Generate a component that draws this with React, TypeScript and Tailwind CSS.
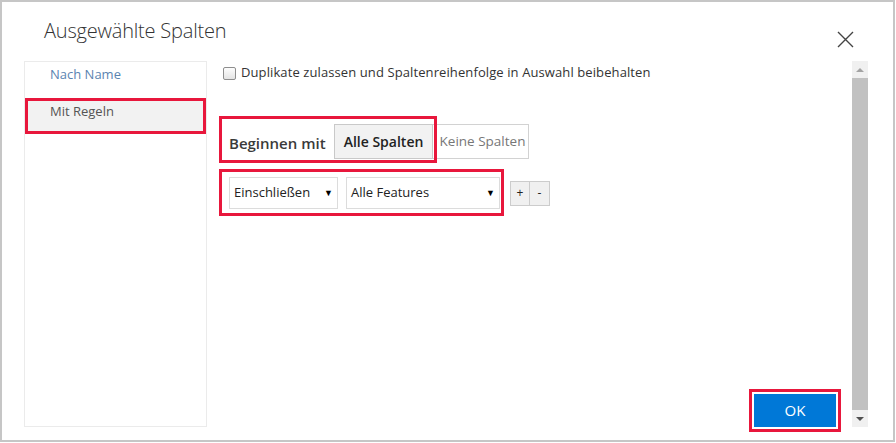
import React from 'react';

const RED = 'border-[#e8173c]';

const Checkbox: React.FC = () => (
  <div className="w-[13px] h-[13px] rounded-[2px] border border-[#8e8e8e] bg-gradient-to-b from-[#fdfdfd] to-[#e4e4e4]" />
);

const Select: React.FC<{ label: string; width: string }> = ({ label, width }) => (
  <div className={`${width} h-[32px] border border-[#dcdcdc] bg-white flex items-center justify-between pl-[4px] pr-[4px] text-[13px] text-[#222]`}>
    <span>{label}</span>
    <span className="text-[9px] text-black">▼</span>
  </div>
);

const Scrollbar: React.FC = () => (
  <div className="w-[16px] mb-[13px] mr-[25px] flex flex-col bg-[#f0f0f0]">
    <div className="h-[17px] flex items-center justify-center">
      <svg width="8" height="4" viewBox="0 0 8 4"><path d="M0 4 L4 0 L8 4 Z" fill="#a3a3a3" /></svg>
    </div>
    <div className="flex-1 bg-[#c1c1c1]" />
    <div className="h-[17px] flex items-center justify-center">
      <svg width="8" height="4" viewBox="0 0 8 4"><path d="M0 0 L4 4 L8 0 Z" fill="#505050" /></svg>
    </div>
  </div>
);

export default function App() {
  return (
    <div className="w-[895px] h-[442px] border-2 border-[#c6c6c6] bg-white flex flex-col font-['Open_Sans','Noto_Sans',sans-serif] text-[#333]">
      {/* Header */}
      <header className="h-[59px] flex items-start justify-between pl-[42px] pr-[39px]">
        <h1 className="mt-[15px] text-[20px] leading-[28px] font-light text-[#333] tracking-[-0.2px]">Ausgewählte Spalten</h1>
        <button className="mt-[28px] w-[18px] h-[18px] flex items-center justify-center">
          <svg width="17" height="17" viewBox="0 0 17 17" stroke="#444" strokeWidth="1.4" fill="none">
            <path d="M1 1 L16 16 M16 1 L1 16" />
          </svg>
        </button>
      </header>

      {/* Body */}
      <div className="flex-1 flex">
        {/* Left nav */}
        <nav className="ml-[22px] mb-[13px] w-[183px] border border-[#ebebeb] flex flex-col text-[13px]">
          <div className="h-[36px] pl-[25px] pt-[2px] leading-[20px] text-[#5b84b1]">Nach Name</div>
          <div className={`h-[36px] border-[3px] ${RED} bg-[#f2f2f2] pl-[22px] leading-[20px] text-[#555]`}>Mit Regeln</div>
        </nav>

        {/* Main */}
        <main className="flex-1 flex flex-col pl-[12px]">
          <label className="mt-[2px] ml-[4px] h-[20px] flex items-center gap-[5px] text-[13px] text-[#333] tracking-[0.1px]">
            <Checkbox />
            <span>Duplikate zulassen und Spaltenreihenfolge in Auswahl beibehalten</span>
          </label>

          <div className="relative mt-[41px] flex items-center">
            <span className="w-[115px] pl-[10px] pt-[4px] text-[15px] font-semibold text-[#3a3a3a]">Beginnen mit</span>
            <button className="w-[99px] h-[35px] border border-[#c9c9c9] bg-[#f2f2f2] text-[14px] font-semibold text-[#222]">Alle Spalten</button>
            <button className="w-[96px] h-[35px] border border-[#d2d2d2] border-l-0 bg-white pl-[4px] text-[13.5px] text-[#777]">Keine Spalten</button>
            <div className={`absolute left-0 top-[-8px] w-[218px] h-[47px] border-[3px] ${RED}`} />
          </div>

          <div className="relative mt-[18px] flex items-center">
            <div className="ml-[10px] flex gap-[8px]">
              <Select label="Einschließen" width="w-[109px]" />
              <Select label="Alle Features" width="w-[154px]" />
            </div>
            <div className="ml-[10px] flex">
              <button className="w-[20px] h-[25px] border border-[#cccccc] bg-[#f0f0f0] text-[12px] text-[#222] leading-none">+</button>
              <button className="w-[20px] h-[25px] border border-l-0 border-[#cccccc] bg-[#f0f0f0] text-[12px] text-[#222] leading-none">-</button>
            </div>
            <div className={`absolute left-0 top-[-8px] w-[285px] h-[47px] border-[3px] ${RED}`} />
          </div>

          <div className={`mt-auto self-end mr-[11px] mb-[8px] border-[3px] ${RED} p-[2px]`}>
            <button className="w-[82px] h-[33px] bg-[#0078d7] text-white text-[15px]">OK</button>
          </div>
        </main>

        <Scrollbar />
      </div>
    </div>
  );
}
